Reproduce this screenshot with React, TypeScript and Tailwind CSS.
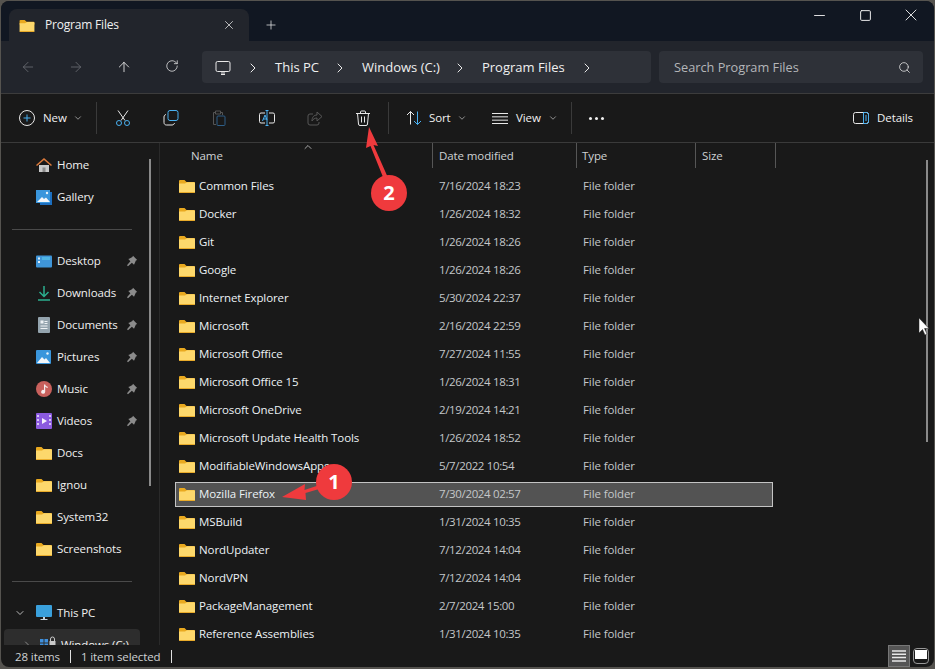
import { ArrowLeft, ArrowRight, ArrowUp, ChevronDown, ChevronRight, ChevronUp, Minus, Plus, RotateCw, Search, Square, X } from 'lucide-react';
import type { ReactNode } from 'react';

const files = [
    ['Common Files', '7/16/2024 18:23'],
    ['Docker', '1/26/2024 18:32'],
    ['Git', '1/26/2024 18:26'],
    ['Google', '1/26/2024 18:26'],
    ['Internet Explorer', '5/30/2024 22:37'],
    ['Microsoft', '2/16/2024 22:59'],
    ['Microsoft Office', '7/27/2024 11:55'],
    ['Microsoft Office 15', '1/26/2024 18:31'],
    ['Microsoft OneDrive', '2/19/2024 14:21'],
    ['Microsoft Update Health Tools', '1/26/2024 18:52'],
    ['ModifiableWindowsApps', '5/7/2022 10:54'],
    ['Mozilla Firefox', '7/30/2024 02:57'],
    ['MSBuild', '1/31/2024 10:35'],
    ['NordUpdater', '7/12/2024 14:04'],
    ['NordVPN', '7/12/2024 14:04'],
    ['PackageManagement', '2/7/2024 15:00'],
    ['Reference Assemblies', '1/31/2024 10:35'],
];

function Folder({ className = 'w-4 h-[14px]' }: { className?: string }) {
    return (
        <svg viewBox="0 0 16 14" className={`shrink-0 ${className}`}>
            <path d="M0 2a1 1 0 0 1 1-1h4.500l2 2H15a1 1 0 0 1 1 1v2H0z" fill="#e9a91f" />
            <path d="M0 4.500h6l2-1.200h7a1 1 0 0 1 1 1V13a1 1 0 0 1-1 1H1a1 1 0 0 1-1-1z" fill="#fdd86c" />
            <path d="M0 13h16a1 1 0 0 1-1 1H1a1 1 0 0 1-1-1z" fill="#e9ab2a" />
        </svg>
    );
}

function Pin() {
    return (
        <svg viewBox="0 0 12 12" className="w-3 h-3 ml-auto mr-[21px] shrink-0">
            <path d="M7 .8 11.200 5 9.900 5.600 8.600 8.400 8 9.800 5.900 7.700 2 11.200 1 10.200 4.400 6.200 2.300 4.100 3.700 3.500 6.400 2.100z" fill="#8b8b8b" />
        </svg>
    );
}

function NavIcon({ name }: { name: string }) {
    if (name === 'Home') {
        return (
            <svg viewBox="0 0 16 16" className="w-4 h-4">
                <path d="M3 8h10v7H3z" fill="#c9c9c9" />
                <path d="M6.500 10.500h3V15h-3z" fill="#8a8a8a" />
                <path d="M0 8 8 1l8 7-1 1-7-6-7 6z" fill="#d9783a" />
            </svg>
        );
    }
    if (name === 'Gallery') {
        return (
            <svg viewBox="0 0 16 16" className="w-4 h-4">
                <path d="M4 3h12v13H4z" fill="#1c6fc0" />
                <path d="M0 1h14v13H0z" fill="#3a96dc" />
                <path d="M1 13 6 8l2 2 2-1.500 4 4.500z" fill="#f4f7fa" />
                <circle cx="11" cy="4" r="1.200" fill="#e8f2fa" />
            </svg>
        );
    }
    if (name === 'Desktop') {
        return (
            <svg viewBox="0 0 16 13" className="w-4 h-[13px]">
                <rect width="16" height="12" y="0.500" rx="1" fill="#3f95d8" />
                <rect x="2" y="2.500" width="2" height="2" fill="#dcecf8" />
                <rect x="2" y="6" width="2" height="2" fill="#dcecf8" />
                <path d="M6 2h8v3H6z" fill="#4fb4e4" />
            </svg>
        );
    }
    if (name === 'Downloads') {
        return (
            <svg viewBox="0 0 16 16" className="w-4 h-4" fill="none" stroke="#2bae8e" strokeWidth="1.500">
                <path d="M8 1v10M3.500 7 8 11.500 12.500 7M2 15h12" />
            </svg>
        );
    }
    if (name === 'Documents') {
        return (
            <svg viewBox="0 0 16 16" className="w-4 h-4">
                <rect x="2" width="12" height="16" rx="1" fill="#94a4ae" />
                <path d="M4.500 3.500h3v3h-3zM8.500 4h3v1h-3zM8.500 6h3v1h-3zM4.500 8.500h7v1h-7zM4.500 11h7v1h-7z" fill="#eef2f5" />
            </svg>
        );
    }
    if (name === 'Pictures') {
        return (
            <svg viewBox="0 0 16 16" className="w-4 h-4">
                <rect y="1" width="15" height="14" rx="1" fill="#3a96dc" />
                <path d="M1 14 6 8l2.500 2.500L10 9l4 5z" fill="#f4f7fa" />
                <circle cx="11.500" cy="4.500" r="1.200" fill="#e8f2fa" />
            </svg>
        );
    }
    if (name === 'Music') {
        return (
            <svg viewBox="0 0 16 16" className="w-4 h-4">
                <circle cx="8" cy="8" r="8" fill="#c8605c" />
                <path d="M8 3.500h1.200v7.200a2 2 0 1 1-1.200-1.800zM9.200 3.500c.3 1.500 1.500 2 2.500 2.300v1.200c-1-.2-2-.7-2.500-1.500z" fill="#f7ecec" />
            </svg>
        );
    }
    if (name === 'Videos') {
        return (
            <svg viewBox="0 0 16 16" className="w-4 h-4">
                <rect width="16" height="16" rx="1" fill="#8b5adf" />
                <path d="M1 2h2v2H1zM1 6h2v2H1zM1 10h2v2H1zM13 2h2v2h-2zM13 6h2v2h-2zM13 10h2v2h-2z" fill="#d6c4f5" />
                <path d="M6 5v6l5-3z" fill="#f5f0fd" />
            </svg>
        );
    }
    return <Folder />;
}

function NavRow({ name, pinned }: { name: string; pinned?: boolean }) {
    return (
        <div className="h-8 flex items-center pl-[35px] text-[#f0f0f0]">
            <span className="w-4 mr-1 flex justify-center"><NavIcon name={name} /></span>
            <span className="pl-px">{name}</span>
            {pinned && <Pin />}
        </div>
    );
}

function NavDivider() {
    return (
        <div className="h-8 flex items-center pl-[11px] pr-[27px]">
            <div className="h-px w-full bg-[#4a4a4a]" />
        </div>
    );
}

function ToolButton({ children }: { children: ReactNode }) {
    return <div className="w-12 h-full flex items-center justify-center shrink-0">{children}</div>;
}

function ToolDivider() {
    return <div className="w-px h-8 bg-[#3a3a3a] shrink-0" />;
}

function Crumb({ label }: { label: string }) {
    return (
        <>
            <span>{label}</span>
            <ChevronRight className="w-4 h-4 text-[#e8e8e8]" strokeWidth={1.5} />
        </>
    );
}

export default function App() {
    return (
        <div className="w-[935px] h-[669px] bg-[#55534f] overflow-hidden relative text-[11.5px] tracking-[-0.1px] pt-px pl-px" style={{ fontFamily: '"Open Sans", "Liberation Sans", sans-serif' }}>
            <div className="w-[933px] h-[666px] rounded-lg overflow-hidden bg-[#191919] flex flex-col">
                {/* Title bar */}
                <div className="h-10 shrink-0 bg-[#111722] flex items-end pl-2 text-[#f0f0f0]">
                    <div className="w-[240px] h-8 bg-[#22252c] rounded-t-lg flex items-center pl-[10px] pr-[13px]">
                        <Folder className="w-4 h-[13px]" />
                        <span className="ml-[10px] text-[12px] tracking-[-0.2px]">Program Files</span>
                        <X className="w-[14px] h-[14px] ml-auto" strokeWidth={1.25} />
                    </div>
                    <div className="h-8 w-[44px] flex items-center justify-center">
                        <Plus className="w-[14px] h-[14px]" strokeWidth={1.25} />
                    </div>
                    <div className="ml-auto h-7 self-start flex items-center">
                        <div className="w-[46px] flex justify-center"><Minus className="w-[17px] h-[17px]" strokeWidth={1.3} /></div>
                        <div className="w-[46px] flex justify-center"><Square className="w-[13px] h-[13px]" strokeWidth={1.8} /></div>
                        <div className="w-[46px] flex justify-center"><X className="w-5 h-5" strokeWidth={1.1} /></div>
                    </div>
                </div>

                {/* Address bar */}
                <div className="h-[53px] shrink-0 bg-[#22252c] border-b border-[#3c3c3c] flex items-center text-[13px] tracking-normal text-[#f0f0f0]">
                    <div className="flex w-[201px] shrink-0 pl-[3px]">
                        <div className="w-12 flex justify-center"><ArrowLeft className="w-4 h-4 text-[#6b6e73]" strokeWidth={1.25} /></div>
                        <div className="w-12 flex justify-center"><ArrowRight className="w-4 h-4 text-[#6b6e73]" strokeWidth={1.25} /></div>
                        <div className="w-12 flex justify-center"><ArrowUp className="w-4 h-4" strokeWidth={1.25} /></div>
                        <div className="w-12 flex justify-center"><RotateCw className="w-[14px] h-[14px]" strokeWidth={1.25} /></div>
                    </div>
                    <div className="w-[449px] h-8 rounded bg-[#2e3138] flex items-center pl-[13px] pt-[2px] shrink-0">
                        <svg viewBox="0 0 16 16" className="w-4 h-4 mr-[14px] shrink-0" fill="none" stroke="#e8e8e8" strokeWidth="1">
                            <rect x="1" y="1.500" width="14" height="10" rx="1.500" />
                            <path d="M6 14.500h4M7 11.500v3M9 11.500v3" />
                        </svg>
                        <ChevronRight className="w-4 h-4 mr-[14px]" strokeWidth={1.5} />
                        <div className="flex items-center gap-[13px]">
                            <Crumb label="This PC" />
                        </div>
                        <div className="flex items-center gap-[12px] ml-[14px]">
                            <Crumb label="Windows (C:)" />
                        </div>
                        <div className="flex items-center gap-[14px] ml-[14px]">
                            <Crumb label="Program Files" />
                        </div>
                    </div>
                    <div className="w-[264px] h-8 rounded bg-[#2e3138] ml-2 flex items-center pl-[15px] pr-[12px] pt-[2px] text-[#b4b6b9] shrink-0">
                        <span className="text-[12.75px]">Search Program Files</span>
                        <Search className="w-[13px] h-[13px] ml-auto -translate-y-px text-[#e0e0e0]" strokeWidth={1.5} />
                    </div>
                </div>

                {/* Command bar */}
                <div className="h-[49px] shrink-0 border-b border-[#3a3a3a] flex items-center text-[#f0f0f0]">
                    <div className="w-[95px] flex items-center pl-[18px] shrink-0">
                        <svg viewBox="0 0 16 16" className="w-4 h-4 mr-2" fill="none" strokeWidth="1">
                            <circle cx="8" cy="8" r="7.500" stroke="#e8e8e8" />
                            <path d="M8 4.500v7M4.500 8h7" stroke="#4ab0f0" />
                        </svg>
                        <span>New</span>
                        <ChevronDown className="w-[10px] h-[10px] ml-[6px] text-[#a8a8a8]" />
                    </div>
                    <ToolDivider />
                    <div className="w-[2px] shrink-0" />
                    <ToolButton>
                        <svg viewBox="0 0 16 16" className="w-4 h-4" fill="none" strokeWidth="1">
                            <path d="M3 .5l7 10M13 .5l-7 10" stroke="#e8e8e8" />
                            <circle cx="4" cy="13" r="2.500" stroke="#4ab0f0" />
                            <circle cx="12" cy="13" r="2.500" stroke="#4ab0f0" />
                        </svg>
                    </ToolButton>
                    <ToolButton>
                        <svg viewBox="0 0 16 16" className="w-4 h-4" fill="none" strokeWidth="1">
                            <rect x="5" y=".5" width="10" height="10" rx="2" stroke="#4ab0f0" />
                            <path d="M3 4.500C1.800 4.800 1 5.600 1 7v5.500C1 14 2 15 3.500 15H9c1.400 0 2.200-.8 2.500-2" stroke="#e8e8e8" />
                        </svg>
                    </ToolButton>
                    <ToolButton>
                        <svg viewBox="0 0 16 16" className="w-4 h-4" fill="none" strokeWidth="1">
                            <path d="M4 2.500H2.500v12H5M10 2.500h1.500V5M4.500 1h5v3h-5z" stroke="#555" />
                            <rect x="6" y="6" width="8" height="9.500" rx="1" stroke="#2f5f88" />
                        </svg>
                    </ToolButton>
                    <ToolButton>
                        <svg viewBox="0 0 16 16" className="w-4 h-4" fill="none" strokeWidth="1">
                            <path d="M6 3H2a1.500 1.500 0 0 0-1.500 1.500v7A1.500 1.500 0 0 0 2 13h4M10 3h4a1.500 1.500 0 0 1 1.500 1.500v7A1.500 1.500 0 0 1 14 13h-4" stroke="#e8e8e8" />
                            <path d="M8 .5v15M6.500.5h3M6.500 15.500h3M3.500 11 6 5l2 5M4.300 9H7.500" stroke="#4ab0f0" />
                        </svg>
                    </ToolButton>
                    <ToolButton>
                        <svg viewBox="0 0 16 16" className="w-4 h-4" fill="none" stroke="#575757" strokeWidth="1">
                            <path d="M6 4H3a2 2 0 0 0-2 2v7a2 2 0 0 0 2 2h7a2 2 0 0 0 2-2v-1" />
                            <path d="M10 2v3C7 5 5 7 5 11c1-2 3-3 5-3v3l5-4.500z" />
                        </svg>
                    </ToolButton>
                    <ToolButton>
                        <svg viewBox="0 0 16 16" className="w-4 h-4" fill="none" stroke="#e8e8e8" strokeWidth="1">
                            <path d="M1 3.500h14M5.500 3.500V2a1 1 0 0 1 1-1h3a1 1 0 0 1 1 1v1.500M2.500 3.500l1 10.500a1.500 1.500 0 0 0 1.500 1.500h6a1.500 1.500 0 0 0 1.500-1.500l1-10.500M6.500 6.500v6M9.500 6.500v6" />
                        </svg>
                    </ToolButton>
                    <div className="w-px shrink-0" />
                    <ToolDivider />
                    <div className="w-[87px] flex items-center pl-[17px] shrink-0">
                        <svg viewBox="0 0 16 16" className="w-4 h-4 mr-[7px]" fill="none" strokeWidth="1">
                            <path d="M4.500 14.500V1.500M1 5l3.500-3.500L8 5" stroke="#e8e8e8" />
                            <path d="M11.500 1.500v13M8 11l3.500 3.500L15 11" stroke="#4ab0f0" />
                        </svg>
                        <span>Sort</span>
                        <ChevronDown className="w-[10px] h-[10px] ml-[6px] text-[#a8a8a8]" />
                    </div>
                    <div className="w-[95px] flex items-center pl-[16px] shrink-0">
                        <svg viewBox="0 0 16 11" className="w-4 h-[11px] mr-2" fill="none" stroke="#e8e8e8" strokeWidth="1">
                            <path d="M0 .5h16M0 3.830h16M0 7.170h16M0 10.500h16" />
                        </svg>
                        <span>View</span>
                        <ChevronDown className="w-[10px] h-[10px] ml-[7px] text-[#a8a8a8]" />
                    </div>
                    <ToolDivider />
                    <div className="w-12 flex justify-center gap-[3px] shrink-0">
                        <span className="w-[3px] h-[3px] rounded-full bg-[#f0f0f0]" />
                        <span className="w-[3px] h-[3px] rounded-full bg-[#f0f0f0]" />
                        <span className="w-[3px] h-[3px] rounded-full bg-[#f0f0f0]" />
                    </div>
                    <div className="ml-auto flex items-center pr-[21px]">
                        <svg viewBox="0 0 16 12" className="w-4 h-3 mr-2" fill="none" strokeWidth="1">
                            <rect x=".5" y=".5" width="15" height="11" rx="2" stroke="#e8e8e8" />
                            <path d="M10.500.5h3a2 2 0 0 1 2 2v7a2 2 0 0 1-2 2h-3zM12 4h2M12 6h2M12 8h2" stroke="#4ab0f0" />
                        </svg>
                        <span>Details</span>
                    </div>
                </div>

                {/* Body */}
                <div className="flex-1 min-h-0 flex">
                    <div className="w-[159px] shrink-0 border-r border-[#2a2a2a] overflow-hidden pt-[6px] relative">
                        <NavRow name="Home" />
                        <NavRow name="Gallery" />
                        <NavDivider />
                        <NavRow name="Desktop" pinned />
                        <NavRow name="Downloads" pinned />
                        <NavRow name="Documents" pinned />
                        <NavRow name="Pictures" pinned />
                        <NavRow name="Music" pinned />
                        <NavRow name="Videos" pinned />
                        <NavRow name="Docs" />
                        <NavRow name="Ignou" />
                        <NavRow name="System32" />
                        <NavRow name="Screenshots" />
                        <NavDivider />
                        <div className="h-8 flex items-center pl-[13px] text-[#f0f0f0]">
                            <ChevronDown className="w-[12px] h-[12px] mr-[10px] text-[#b8b8b8]" />
                            <svg viewBox="0 0 16 16" className="w-4 h-4 mr-[5px]">
                                <rect width="16" height="12" rx="1" fill="#3aa0dc" />
                                <path d="M7 12h2v2H7zM4.500 14h7v1h-7z" fill="#c8d4dc" />
                            </svg>
                            <span>This PC</span>
                        </div>
                        <div className="h-8 ml-[3px] mr-[19px] rounded bg-[#2d2d2d] flex items-center pl-[17px] text-[#f0f0f0]">
                            <ChevronRight className="w-[12px] h-[12px] mr-[7px] text-[#8a8a8a]" />
                            <svg viewBox="0 0 16 14" className="w-4 h-[14px] mr-[5px] shrink-0 -translate-y-[2px]">
                                <path d="M0 3h3.500v3.500H0zM4.500 3H8v3.500H4.500zM0 7.500h3.500V11H0zM4.500 7.500H8V11H4.500z" fill="#3f8fdc" />
                                <path d="M9.500 5h6v6h-6z" fill="#c8c8c8" />
                                <path d="M10.500 5V3a2 2 0 0 1 4 0v2" fill="none" stroke="#c8c8c8" />
                            </svg>
                            <span>Windows (C:)</span>
                        </div>
                        <div className="absolute left-[148px] top-[16px] w-[2px] h-[327px] bg-[#8a8a8a]" />
                    </div>

                    <div className="flex-1 min-w-0 relative overflow-hidden">
                        <div className="h-[29px] flex items-start text-[#cfd2d4]">
                            <div className="w-[273px] h-[25px] flex items-center pl-[31px] border-r border-[#565656]">Name</div>
                            <div className="w-[144px] h-[25px] flex items-center pl-[6px] border-r border-[#565656]">Date modified</div>
                            <div className="w-[119px] h-[25px] flex items-center pl-[5px] border-r border-[#565656]">Type</div>
                            <div className="w-[80px] h-[25px] flex items-center pl-[6px] border-r border-[#565656]">Size</div>
                        </div>
                        {files.map(([name, date]) => {
                            const selected = name === 'Mozilla Firefox';
                            return (
                                <div key={name} className="h-7 flex items-center">
                                    <div className={`h-[25px] w-[598px] ml-[15px] flex items-center border ${selected ? 'bg-[#535353] border-[#c4c4c4]' : 'border-transparent'}`}>
                                        <div className="w-[258px] pl-[3px] flex items-center text-[#ecf2f5] whitespace-nowrap overflow-hidden">
                                            <Folder />
                                            <span className="ml-1">{name}</span>
                                        </div>
                                        <div className="w-[144px] pl-[5px] text-[#c4c7c9] tracking-[-0.35px]">{date}</div>
                                        <div className="pl-[5px] text-[#c4c7c9]">File folder</div>
                                    </div>
                                </div>
                            );
                        })}
                        <ChevronUp className="absolute left-[142px] top-[-2px] w-[12px] h-[12px] text-[#a8a8a8]" />
                        <div className="absolute left-[766px] top-[17px] w-[2px] h-[282px] bg-[#8a8a8a]" />
                    </div>
                </div>

                {/* Status bar */}
                <div className="h-[22px] shrink-0 flex items-center pl-[14px] text-[#cfd2d4] relative">
                    <span className="pt-[2px]">28 items</span>
                    <span className="w-px h-[13px] bg-[#e0e0e0] ml-[10px]" />
                    <span className="ml-[10px] pt-[2px]">1 item selected</span>
                    <span className="w-px h-[13px] bg-[#e0e0e0] ml-[10px]" />
                    <div className="ml-auto flex items-center pr-[5px] gap-[3px]">
                        <div className="w-[22px] h-[22px] bg-[#555] border border-[#777] flex items-center justify-center">
                            <svg viewBox="0 0 14 12" className="w-[14px] h-3" fill="none" stroke="#e8e8e8" strokeWidth="1.500">
                                <path d="M0 1h14M0 4.300h14M0 7.600h14M0 11h14" />
                            </svg>
                        </div>
                        <div className="w-4 h-4 border border-[#999] rounded-sm flex flex-col items-center p-px">
                            <div className="w-full h-[9px] bg-white" />
                        </div>
                    </div>
                </div>
            </div>

            {/* Annotations on top of the screenshot */}
            <svg className="absolute left-0 top-0 pointer-events-none" width="935" height="669" viewBox="0 0 935 669">
                <path d="M282 497 305 484 304.500 490 318 485.500 319 489 305.500 493 306 500z" fill="#ef3a3d" />
                <path d="M369 127 378 146 373.500 145 389 180 385 182 370.500 146 366 148z" fill="#ef3a3d" />
                <path d="M919 318v15l3.500-3.500 2.500 5.500 2-1-2.500-5.500H929z" fill="#fff" stroke="#222" strokeWidth=".5" />
            </svg>
            <div className="absolute left-[316px] top-[464px] w-9 h-9 rounded-full bg-[#ef3a3d] flex items-center justify-center text-white text-[20px] font-bold">1</div>
            <div className="absolute left-[371px] top-[175px] w-9 h-9 rounded-full bg-[#ef3a3d] flex items-center justify-center text-white text-[20px] font-bold">2</div>
        </div>
    );
}
